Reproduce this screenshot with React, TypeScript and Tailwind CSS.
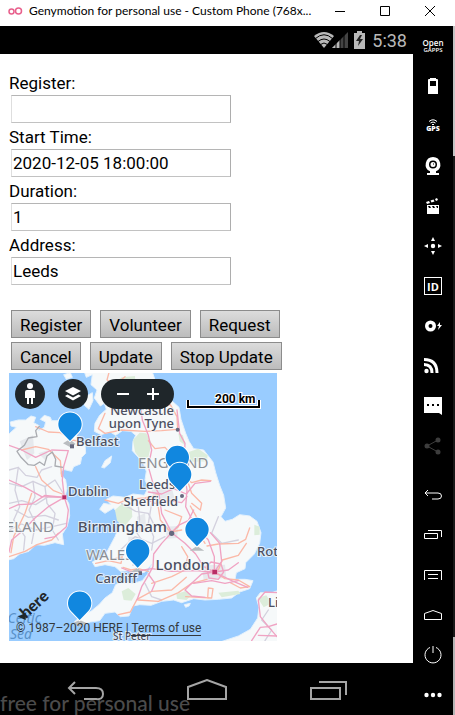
import type { ReactNode } from 'react';

const FIELDS = [
  { id: 'register', label: 'Register:', value: '' },
  { id: 'start', label: 'Start Time:', value: '2020-12-05 18:00:00' },
  { id: 'duration', label: 'Duration:', value: '1' },
  { id: 'address', label: 'Address:', value: 'Leeds' },
];

const ACTIONS = [
  ['Register', 'Volunteer', 'Request'],
  ['Cancel', 'Update', 'Stop Update'],
];

const IRELAND =
  'M0 196 L14 190 L34 172 L18 168 L16 156 L40 150 L62 150 L78 138 L92 142 L86 158 L104 168 L100 182 L118 172 L122 156 L106 148 L118 136 L136 142 L140 152 L160 152 L176 148 L204 160 L214 196 L222 216 L240 222 L242 250 L230 262 L226 282 L206 290 L200 304 L174 298 L166 310 L182 330 L186 356 L180 380 L192 402 L194 438 L186 470 L172 492 L176 524 L150 518 L118 526 L92 524 L72 544 L44 552 L26 566 L0 572 Z';

const BRITAIN =
  'M236 0 L244 22 L262 14 L258 44 L276 60 L268 84 L286 108 L298 100 L304 118 L284 136 L270 160 L268 184 L288 194 L316 186 L332 196 L352 182 L378 184 L392 196 L384 214 L382 242 L400 262 L416 282 L424 304 L420 330 L430 352 L418 376 L384 372 L360 382 L324 378 L304 388 L318 404 L296 400 L284 418 L300 430 L326 414 L342 436 L344 466 L330 500 L312 534 L300 556 L262 576 L270 590 L300 584 L330 590 L346 604 L372 602 L396 612 L420 606 L440 582 L428 612 L412 632 L386 640 L348 636 L332 644 L322 668 L300 684 L282 704 L258 724 L228 738 L208 756 L222 768 L256 756 L284 752 L300 730 L330 726 L346 740 L372 738 L384 708 L404 704 L438 706 L470 694 L506 690 L530 698 L566 686 L600 690 L640 688 L680 684 L704 666 L734 656 L744 632 L720 628 L690 628 L694 608 L720 596 L722 578 L748 552 L764 520 L768 488 L756 454 L734 438 L704 434 L682 448 L660 454 L648 440 L662 414 L656 376 L644 346 L632 308 L624 276 L596 240 L566 236 L552 214 L542 190 L528 148 L522 112 L500 92 L470 84 L440 60 L450 30 L440 0 Z';

const FRANCE = 'M830 658 L800 668 L766 668 L754 684 L762 712 L758 744 L736 778 L700 798 L646 816 L830 820 Z';

const GREENS = [
  'M384 210 L404 188 L424 190 L440 220 L430 262 L410 272 L390 246 Z',
  'M320 44 L350 22 L390 18 L392 62 L340 68 Z',
  'M330 420 L352 400 L380 412 L382 440 L358 470 L336 452 Z',
  'M540 250 L580 236 L608 256 L606 274 L552 276 Z',
  'M350 664 L370 654 L392 672 L380 692 L356 690 Z',
  'M748 464 L764 470 L764 494 L748 496 Z',
  'M514 672 L540 664 L560 676 L544 690 L516 686 Z',
  'M640 668 L700 662 L706 672 L650 682 Z',
  'M366 526 L392 510 L400 520 L380 540 Z',
  'M520 190 L534 196 L540 226 L524 214 Z',
  'M758 684 L784 676 L800 700 L776 712 Z',
];

const MINOR_ROADS = [
  'M12 300 L40 292 L62 316 L96 322 L110 300 L140 290',
  'M12 340 L50 350 L84 334 L120 350 L150 330 L176 372',
  'M40 292 L30 360 L44 410 L26 450 L60 500 L56 540',
  'M84 334 L90 380 L72 420 L92 460 L80 520',
  'M12 400 L50 392 L92 404 L130 380 L174 382',
  'M120 350 L126 400 L150 430 L142 480 L160 510',
  'M12 480 L50 462 L92 480 L142 470 L184 460',
  'M30 420 L70 442 L120 436 L160 450',
  'M400 410 L404 450 L390 480 L410 510 L400 550 L384 586',
  'M350 400 L392 424 L430 430 L448 466',
  'M440 400 L430 460 L446 500 L440 540',
  'M346 540 L390 500 L440 520 L480 500',
  'M420 640 L440 680 L470 690',
  'M640 440 L620 490 L650 520 L700 510',
  'M790 720 L770 750 L800 780 L780 812',
];

const ORANGE_ROADS = [
  'M92 170 L130 186 L166 188 L200 210 L226 214',
  'M50 240 L92 230 L130 238 L166 272 L170 320',
  'M12 560 L60 544 L96 524 L140 510 L160 490',
  'M92 290 L110 330 L146 362 L172 372',
  'M80 370 L60 430 L26 500 L18 548',
  'M300 130 L280 176 L300 190 L350 180 L420 184 L470 182 L516 178',
  'M440 90 L470 110 L496 104 L516 140 L518 178',
  'M430 212 L450 236 L480 232 L496 250 L540 236',
  'M520 300 L560 338 L590 330 L618 332',
  'M550 340 L560 370 L590 400 L586 420 L560 400',
  'M480 420 L530 440 L520 470 L500 486',
  'M460 412 L466 450 L496 486 L530 480',
  'M300 390 L340 400 L366 388 L420 384 L460 374',
  'M272 580 L310 572 L348 580 L352 560 L330 566',
  'M354 592 L378 600 L400 596 L430 604',
  'M340 734 L376 726 L396 688 L440 664 L500 660 L544 622',
  'M400 690 L460 694 L520 668 L560 640 L606 628',
  'M606 528 L640 522 L700 520 L722 508 L734 474',
  'M640 600 L652 570 L700 556 L724 520',
  'M628 606 L660 626 L700 630 L734 650 L706 654 L676 638',
  'M542 680 L620 684 L624 656 L610 654 L608 684',
  'M556 408 L574 440 L576 480 L600 520',
  'M440 640 L500 620 L540 600 L548 560 L530 530',
  'M314 0 L306 30 L330 44 L360 20',
];

const PINK_ROADS = [
  'M12 226 L50 240 L92 262 L140 240 L190 242 L176 290 L172 330 L178 382',
  'M178 382 L120 376 L80 402 L40 404 L12 416',
  'M178 382 L190 420 L184 470 L150 500 L120 506',
  'M178 382 L130 410 L90 444 L56 480 L20 510 L12 546',
  'M12 330 L60 352 L110 380 L178 382',
  'M404 90 L412 150 L430 196 L440 240 L430 290 L444 340 L462 372 L470 430 L500 488',
  'M516 120 L524 190 L540 220 L536 300 L546 360 L542 410 L566 460 L610 510 L628 560 L628 604',
  'M430 366 L470 372 L506 356 L544 372 L570 340 L616 334',
  'M420 386 L450 400 L490 392 L530 398 L546 380',
  'M500 488 L470 520 L446 552 L444 590 L428 620 L410 650 L396 690',
  'M500 488 L540 520 L572 552 L596 590 L628 606',
  'M350 594 L380 606 L440 596 L500 604 L570 602 L628 606',
  'M500 488 L520 466 L550 452 L566 420',
  'M628 606 L590 612 L560 640 L540 660 L560 678 L600 682',
  'M628 606 L650 574 L644 520 L616 488',
  'M628 606 L670 600 L700 578',
  'M604 590 L618 576 L648 582 L656 606 L640 628 L612 624 Z',
  'M628 606 L680 632 L728 652',
  'M566 640 L620 632 L660 640 L700 632',
  'M430 612 L450 640 L440 664',
  'M816 668 L780 666 L760 690 L766 740 L790 770 L816 762',
  'M740 812 L766 772 L790 770 L816 800',
  'M760 796 L816 798',
];

const BORDER =
  'M104 168 L92 182 L96 200 L70 204 L58 226 L36 244 L48 262 L70 284 L88 286 L104 276 L118 286 L126 258 L142 246 L152 268 L150 288 L174 292';

const PINS = [
  [195, 162],
  [517, 262],
  [524, 313],
  [576, 478],
  [398, 542],
  [224, 699],
];

type Place = { text: string; x: number; y: number; size: string; end?: boolean };

const CITIES: Place[] = [
  { text: 'Newcastle', x: 165, y: 42, size: 'text-[13px]', end: true },
  { text: 'upon Tyne', x: 165, y: 55, size: 'text-[13px]', end: true },
  { text: 'Belfast', x: 67, y: 73, size: 'text-[13px]' },
  { text: 'Dublin', x: 59, y: 123, size: 'text-[13px]' },
  { text: 'Leeds', x: 130, y: 116, size: 'text-[13px]' },
  { text: 'Sheffield', x: 169, y: 133, size: 'text-[13px]', end: true },
  { text: 'Birmingham', x: 158, y: 159, size: 'text-[15px]', end: true },
  { text: 'London', x: 201, y: 197, size: 'text-[15px]', end: true },
  { text: 'Cardiff', x: 128, y: 210, size: 'text-[13px]', end: true },
  { text: 'Rotterdam', x: 248, y: 183, size: 'text-[13px]' },
  { text: 'Lille', x: 259, y: 234, size: 'text-[13px]' },
  { text: 'St Peter', x: 104, y: 267, size: 'text-[10px]' },
];

function Roads({ lines, color, width }: { lines: string[]; color: string; width: number }) {
  return (
    <g fill="none" stroke={color} strokeWidth={width} strokeLinejoin="round" strokeLinecap="round">
      {lines.map((d) => (
        <path key={d} d={d} />
      ))}
    </g>
  );
}

function MapDrawing() {
  return (
    <svg viewBox="0 0 268 268" className="block size-full font-['Noto_Sans',sans-serif]" role="img" aria-label="Map of Britain and Ireland">
      <rect width="268" height="268" fill="#99ccff" />
      <g transform="scale(.33333) translate(-12 -9)">
        <g fill="#f6f9fa" stroke="#e4f1fc" strokeWidth="3" strokeLinejoin="round">
          <path d={IRELAND} />
          <path d={BRITAIN} />
          <path d={FRANCE} />
          <path d="M290 292 L300 272 L320 258 L316 278 L298 294 Z" />
          <path d="M538 704 L556 700 L552 708 L542 712 Z" />
          <path d="M238 82 L262 68 L264 92 L252 118 L238 106 Z" />
          <path d="M176 14 L196 8 L202 22 L184 28 Z M214 30 L234 40 L224 60 L212 50 Z M232 50 L244 60 L236 76 Z" />
        </g>
        <g fill="#dcedda">
          {GREENS.map((d) => (
            <path key={d} d={d} />
          ))}
        </g>
        <g fill="#e6e9ed">
          <path d="M44 214 L84 196 L88 250 L66 270 Z M100 250 L130 240 L120 270 Z M396 440 L420 430 L424 480 L398 490 Z M440 360 L500 352 L510 390 L450 396 Z M480 470 L520 468 L516 504 L486 506 Z" />
          <path d="M590 586 L660 584 L664 624 L596 630 Z M370 500 L400 500 L396 550 L370 560 Z" />
        </g>
        <Roads lines={MINOR_ROADS} color="#d3d1de" width={4} />
        <Roads lines={ORANGE_ROADS} color="#fbb9a8" width={4} />
        <Roads lines={PINK_ROADS} color="#f0a3c3" width={4} />
        <path d={BORDER} fill="none" stroke="#aaacb1" strokeWidth="4" strokeLinejoin="round" />
        <path d="M174 220 L194 208 L212 222 L196 232 Z M554 542 L576 528 L598 542 Z M376 606 L398 594 L412 606 Z M206 758 L224 750 L246 760 L220 770 Z" fill="#b9bdc0" />
        <g fill="#67697f">
          <rect x="195" y="223" width="12" height="12" />
          <circle cx="518" cy="179" r="6" />
          <circle cx="531" cy="378" r="6" />
          <circle cx="500" cy="490" r="8" />
          <rect x="400" y="604" width="11" height="11" />
        </g>
        <g fill="#b82e65" stroke="#f3bdd2" strokeWidth="2">
          <rect x="171" y="375" width="14" height="14" />
          <rect x="621" y="598" width="16" height="16" />
        </g>
      </g>

      <g className="fill-[#8b8e94] text-[15px]" stroke="#f6f9fa" strokeOpacity=".8" strokeWidth="2" paintOrder="stroke">
        <text x="129" y="95">ENGLAND</text>
        <text x="45" y="159" textAnchor="end">IRELAND</text>
        <text x="77" y="187">WALES</text>
      </g>
      <g className="fill-[#5a91c8] text-[14px] italic">
        <text x="32" y="250" textAnchor="end">Celtic</text>
        <text x="1" y="266">Sea</text>
      </g>
      <g className="fill-[#4d5061] font-medium" stroke="#f6f9fa" strokeOpacity=".8" strokeWidth="2" paintOrder="stroke">
        {CITIES.map((c) => (
          <text key={c.text} x={c.x} y={c.y} textAnchor={c.end ? 'end' : 'start'} className={c.size}>
            {c.text}
          </text>
        ))}
      </g>

      <g transform="scale(.33333) translate(-12 -9)">
        {PINS.map(([x, y]) => (
          <path
            key={x}
            transform={`translate(${x} ${y})`}
            d="M0 51 L-26 24 A35 35 0 1 1 26 24 Z"
            fill="#1187df"
            stroke="#fff"
            strokeWidth="6"
            paintOrder="stroke"
          />
        ))}
        <path d="M38 740 L62 728 L62 750 Z" fill="#1f262a" />
      </g>
      <text transform="translate(17 246) rotate(-42)" className="fill-[#1f262a] font-['Lato',sans-serif] text-[16px] font-black">
        here
      </text>
      <path d="M179 27v7h71v-7" fill="none" stroke="#fff" strokeWidth="4" />
      <path d="M179 27v7h71v-7" fill="none" stroke="#000" strokeWidth="2" />
      <text x="206" y="30" className="fill-black font-['Roboto',sans-serif] text-[12px] font-bold" stroke="#fff" strokeWidth="2" paintOrder="stroke">
        200 km
      </text>
    </svg>
  );
}

function MapPanel() {
  return (
    <section className="relative size-[268px] overflow-hidden">
      <MapDrawing />
      <div className="absolute left-1.5 top-1.5 flex text-white">
        <button aria-label="Street level" className="grid size-[30px] place-items-center rounded-full bg-[#1f262a]">
          <svg width="12" height="22" viewBox="0 0 12 22" fill="currentColor">
            <circle cx="6" cy="3" r="3" />
            <path d="M3 7h6q2 0 2 2v6H9v6H7v-6H5v6H3v-6H1V9q0-2 2-2z" />
          </svg>
        </button>
        <button aria-label="Map layers" className="ml-[13px] grid size-[30px] place-items-center rounded-full bg-[#1f262a]">
          <svg width="18" height="14" viewBox="0 0 18 14" fill="currentColor">
            <path d="M9 0l8 4-8 4.500L1 4z" />
            <path d="M1 9l2.500-1.500L9 10.500l5.500-3L17 9l-8 4.500z" />
          </svg>
        </button>
        <div className="ml-[13px] flex h-[30px] w-[73px] items-center justify-center gap-1 rounded-full bg-[#1f262a]">
          <button aria-label="Zoom out" className="grid size-[26px] place-items-center">
            <svg width="12" height="12" stroke="currentColor" strokeWidth="2">
              <path d="M0 6h12" />
            </svg>
          </button>
          <button aria-label="Zoom in" className="grid size-[26px] place-items-center">
            <svg width="12" height="12" stroke="currentColor" strokeWidth="2">
              <path d="M0 6h12M6 0v12" />
            </svg>
          </button>
        </div>
      </div>
      <p className="absolute bottom-[5px] left-[7px] whitespace-nowrap text-[12px] leading-4 text-[#33383c]">
        © 1987–2020 HERE |{' '}
        <a href="#terms" className="border-b border-[#33383c]">
          Terms of use
        </a>
      </p>
    </section>
  );
}

function Glyph({ children }: { children: ReactNode }) {
  return (
    <svg width="18" height="18" viewBox="0 0 18 18" fill="currentColor">
      {children}
    </svg>
  );
}

const line = { fill: 'none', stroke: 'currentColor', strokeWidth: 1 };

const TOOLS: { name: string; icon: ReactNode; tone?: string }[] = [
  {
    name: 'Open GAPPS',
    icon: (
      <span className="flex flex-col items-center font-['Open_Sans',sans-serif] font-semibold">
        <span className="text-[8px] leading-[8px]">Open</span>
        <span className="text-[6px] leading-[6px]">GAPPS</span>
      </span>
    ),
  },
  { name: 'Battery', icon: <Glyph><path fillRule="evenodd" d="M6 1h6v1h1q1 0 1 1v14H4V3q0-1 1-1h1zM6 4v5h6V4z" /></Glyph> },
  {
    name: 'GPS',
    icon: (
      <span className="flex flex-col items-center">
        <svg width="10" height="6" viewBox="0 0 10 6" {...line}>
          <path d="M1 2.500Q5-1 9 2.500M2.500 4Q5 2 7.500 4" />
          <path d="M4 5.500h2" />
        </svg>
        <span className="font-['Open_Sans',sans-serif] text-[7px] font-extrabold leading-[8px]">GPS</span>
      </span>
    ),
  },
  {
    name: 'Camera',
    icon: (
      <Glyph>
        <path fillRule="evenodd" d="M9 0a7.500 7.500 0 0 1 3 14.300V16h3v2H3v-2h3v-1.700A7.500 7.500 0 0 1 9 0zM9 3.500a4 4 0 1 0 0 8 4 4 0 0 0 0-8z" />
        <path fillRule="evenodd" d="M9 5a2.500 2.500 0 1 0 0 5 2.500 2.500 0 0 0 0-5zM9 6.500h1v1H9z" />
      </Glyph>
    ),
  },
  {
    name: 'Capture',
    icon: (
      <Glyph>
        <path fillRule="evenodd" d="M3 8h12v9H3zM4 9l1 2h2L6 9zM8 9l1 2h2l-1-2zM12 9l1 2h1V9z" />
        <path d="M2 5l3-1 1 2-3 1zM6.500 3.500l3-1 1 2-3 1zM11 2l2-1 1 2-2 1z" />
      </Glyph>
    ),
  },
  {
    name: 'Multi-touch',
    icon: <Glyph><circle cx="9" cy="9" r="2.200" /><path d="M9 0l2 4H7zM9 18l2-4H7zM0 9l4-2v4zM18 9l-4-2v4z" /></Glyph>,
  },
  {
    name: 'Identifiers',
    icon: (
      <span className="grid size-[18px] place-items-center border border-white font-['Open_Sans',sans-serif] text-[11px] font-bold leading-none">ID</span>
    ),
  },
  {
    name: 'Disk',
    icon: (
      <Glyph>
        <path fillRule="evenodd" d="M6.500 3.500a5.500 5.500 0 1 1 0 11 5.500 5.500 0 0 1 0-11zM6.500 7a2 2 0 1 0 0 4 2 2 0 0 0 0-4z" />
        <path d="M16 5l-3 4h2l-1 4 4-5h-2z" />
      </Glyph>
    ),
  },
  {
    name: 'Network',
    icon: (
      <Glyph>
        <circle cx="2.500" cy="14" r="2.200" />
        <path d="M0 7.500q8 0 8 8.500M0 2.500q13 0 13 13.500" fill="none" stroke="currentColor" strokeWidth="3" />
      </Glyph>
    ),
  },
  {
    name: 'Messages',
    icon: <Glyph><path fillRule="evenodd" d="M0 0h18v18l-3-2H0zM3 7v2h2V7zM8 7v2h2V7zM13 7v2h2V7z" /></Glyph>,
  },
  {
    name: 'Share',
    tone: 'text-[#3d3d3d]',
    icon: (
      <Glyph>
        <circle cx="3" cy="9" r="2.500" />
        <circle cx="14" cy="3" r="2.500" />
        <circle cx="14" cy="15" r="2.500" />
        <path d="M14 3L3 9l11 6" fill="none" stroke="currentColor" />
      </Glyph>
    ),
  },
];

const KEYS: { name: string; icon: ReactNode }[] = [
  { name: 'Back', icon: <Glyph><path {...line} d="M4 4L1 7l3 3M1 7h13q3.500 0 3.500 3t-3.500 3H8" /></Glyph> },
  { name: 'Recent apps', icon: <Glyph><path {...line} d="M.5 7.500h13v5H.5zM4 4.500h13.500V11" /></Glyph> },
  { name: 'Menu', icon: <Glyph><path {...line} d="M.5 14V4.500h17V14M4 8.500h10M4 12.500h10" /></Glyph> },
  { name: 'Home', icon: <Glyph><path {...line} d="M.5 13.500v-6l8.500-3 8.500 3v6z" /></Glyph> },
  { name: 'Power', icon: <Glyph><path {...line} d="M6 1.500a8 8 0 1 0 6 0M9 0v7" /></Glyph> },
  { name: 'More', icon: <Glyph><circle cx="2.500" cy="9" r="2.200" /><circle cx="9" cy="9" r="2.200" /><circle cx="15.500" cy="9" r="2.200" /></Glyph> },
];

function TitleBar() {
  return (
    <header className="flex h-[26px] items-center bg-white pl-2 font-['Lato',sans-serif] text-[12px] text-black">
      <svg width="15" height="8" viewBox="0 0 15 8" fill="none" stroke="#e8608c" strokeWidth="1.500" className="mb-1 shrink-0">
        <circle cx="3.500" cy="4.500" r="2.500" />
        <circle cx="10.500" cy="4" r="3" />
      </svg>
      <h1 className="min-w-0 flex-1 truncate pb-1 pl-1.5">Genymotion for personal use - Custom Phone (768x...</h1>
      <div className="flex shrink-0 pb-1 pr-0.5">
        <button aria-label="Minimize" className="grid h-5 w-[45px] place-items-center">
          <svg width="10" height="10" stroke="#000"><path d="M0 5.500h10" /></svg>
        </button>
        <button aria-label="Maximize" className="grid h-5 w-[45px] place-items-center">
          <svg width="10" height="10" fill="none" stroke="#000"><path d="M.5.5h9v9h-9z" /></svg>
        </button>
        <button aria-label="Close" className="grid h-5 w-[46px] place-items-center">
          <svg width="10" height="10" stroke="#000"><path d="M0 0l10 10M10 0L0 10" /></svg>
        </button>
      </div>
    </header>
  );
}

function StatusBar() {
  return (
    <div className="flex h-7 items-center justify-end bg-black pr-1.5 text-[18px] text-[#b9b9b9]">
      <svg width="52" height="18" viewBox="0 0 52 18" fill="#b9b9b9">
        <path d="M0 5Q10-3 20 5L10 17z" />
        <path d="M1.500 7.500Q10 0 18.500 7.500M4 10.500q6-5 12 0M6.500 13.500q3.500-3 7 0" fill="none" stroke="#000" />
        <path d="M34 1v16H18z" fill="#444" />
        <path d="M26 9v8h-8z" />
        <path d="M22 1v16M26 1v16M30 1v16" stroke="#000" />
        <path d="M40 2h3V0h5v2h3v16H40z" />
        <path d="M46 4l-4 6h3l-1 5 5-7h-3l2-4z" fill="#222" />
      </svg>
      <time className="ml-1.5">5:38</time>
    </div>
  );
}

function NavBar() {
  return (
    <nav className="relative flex h-[52px] items-start bg-black pl-[67px] pt-4 text-[#a5a5a5]">
      <button aria-label="Back">
        <svg width="38" height="22" {...line} strokeWidth="2"><path d="M8 3L2 9l6 6M2 9h27q7 0 7 6t-7 5H17" /></svg>
      </button>
      <button aria-label="Home" className="ml-[82px]">
        <svg width="40" height="22" {...line} strokeWidth="2"><path d="M1 20V8l19-7 19 7v12z" /></svg>
      </button>
      <button aria-label="Recent apps" className="ml-[83px]">
        <svg width="37" height="22" {...line} strokeWidth="2"><path d="M1 9h29v11H1zM9 3h27v13" /></svg>
      </button>
      <p className="absolute bottom-0 left-0 whitespace-nowrap font-['Lato',sans-serif] text-[21px] font-medium leading-6 text-[#4b4b4b]">
        free for personal use
      </p>
    </nav>
  );
}

export default function App() {
  return (
    <div className="flex min-h-screen flex-col bg-white font-['Roboto',sans-serif]">
      <TitleBar />
      <div className="flex flex-1">
        <div className="flex min-w-0 flex-1 flex-col">
          <StatusBar />
          <main className="flex-1 px-[9px] pt-[15px] text-[17px] text-black">
            <form>
              {FIELDS.map((f) => (
                <div key={f.id}>
                  <label htmlFor={f.id} className="block h-[26px] leading-7">
                    {f.label}
                  </label>
                  <input
                    id={f.id}
                    defaultValue={f.value}
                    className="ml-0.5 block h-7 w-[220px] border border-[#dedede] border-b-[#c2c2c2] border-r-[#adadad] border-t-[#b5b5b5] bg-white px-px outline-none"
                  />
                </div>
              ))}
              <div className="ml-0.5 mt-[25px] space-y-1">
                {ACTIONS.map((row) => (
                  <div key={row[0]} className="flex gap-[9px]">
                    {row.map((name) => (
                      <button
                        key={name}
                        type="button"
                        className="h-7 whitespace-nowrap border border-[#8c8c8c] bg-linear-to-b from-[#dcdcdc] to-[#bcbcbc] px-2 pt-0.5 leading-6"
                      >
                        {name}
                      </button>
                    ))}
                  </div>
                ))}
              </div>
            </form>
            <div className="pb-4 pt-[3px]">
              <MapPanel />
            </div>
          </main>
          <NavBar />
        </div>
        <aside className="flex w-10 shrink-0 flex-col bg-black text-white">
          {TOOLS.map((t) => (
            <button key={t.name} aria-label={t.name} className={`grid h-10 place-items-center ${t.tone ?? ''}`}>
              {t.icon}
            </button>
          ))}
          <div className="mt-[9px] flex flex-col">
            {KEYS.map((k) => (
              <button key={k.name} aria-label={k.name} className="grid h-10 place-items-center">
                {k.icon}
              </button>
            ))}
          </div>
        </aside>
        <div className="flex w-0.5 shrink-0 flex-col">
          <div className="h-[130px] bg-[#c4c4c4]" />
          <div className="flex-1 bg-[#181818]" />
          <div className="h-[78px] bg-[#b5b5b5]" />
        </div>
      </div>
    </div>
  );
}
